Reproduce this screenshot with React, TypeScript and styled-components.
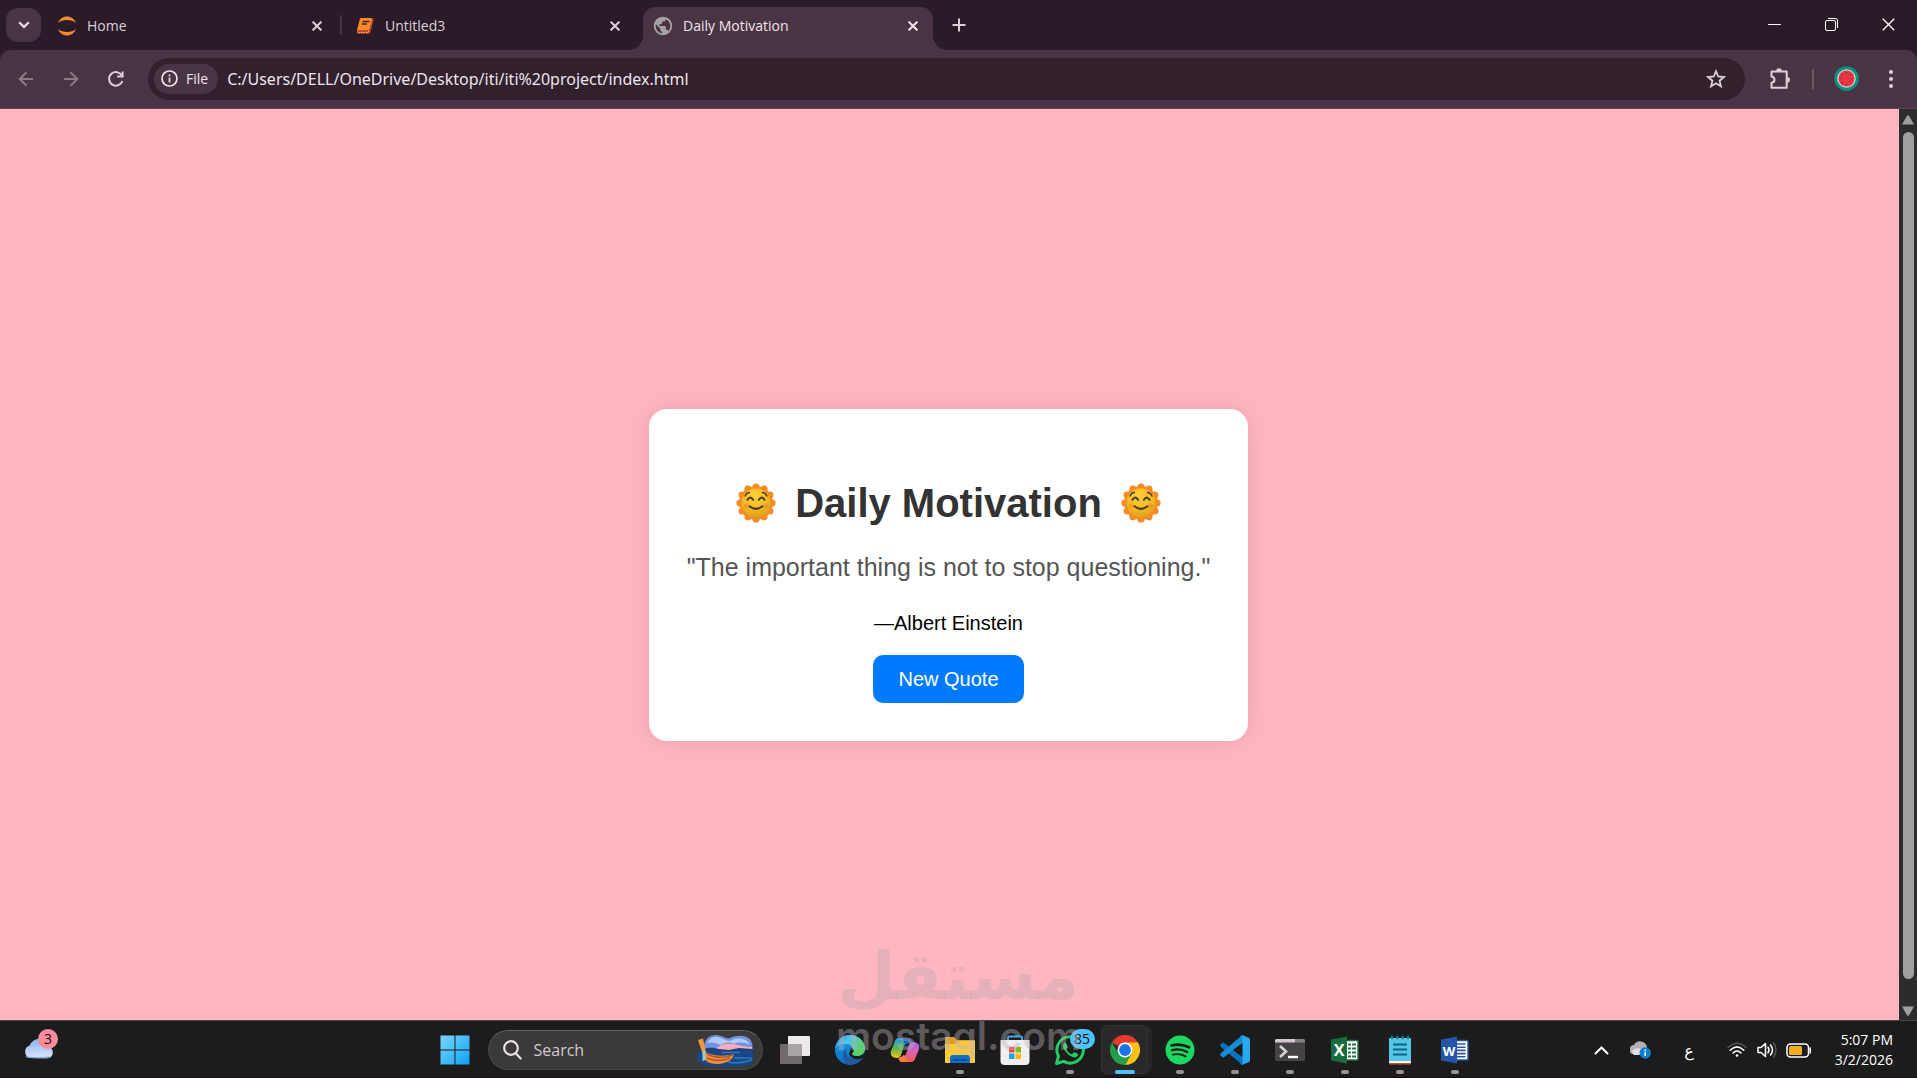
import React from "react";
import styled, { createGlobalStyle } from "styled-components";
import { MdPublic } from "react-icons/md";

const frame = "#2b1a27";
const surface = "#4a3444";
const field = "#33202d";
const ink = "#dccfd8";
const uiFont = '"Open Sans", "Noto Sans", sans-serif';

const GlobalStyle = createGlobalStyle`
  * { box-sizing: border-box; }
  body { margin: 0; background: ${frame}; font-family: ${uiFont}; }
  button, input { font: inherit; color: inherit; border: 0; padding: 0; background: none; outline: none; }
  svg { display: block; flex: none; }
`;

const Screen = styled.div`
  height: 100vh;
  display: flex;
  flex-direction: column;
  overflow: hidden;
  position: relative;
`;

/* ---------- browser frame ---------- */

const TabStrip = styled.header`
  height: 50px;
  display: flex;
  align-items: flex-start;
  padding-left: 6px;
  background: ${frame};
  color: ${ink};
`;

const TabSearch = styled.button`
  width: 35px;
  height: 34px;
  margin: 8px 6px 0 0;
  border-radius: 12px;
  background: ${surface};
  display: grid;
  place-items: center;
`;

const Tab = styled.div<{ $active?: boolean }>`
  position: relative;
  width: 290px;
  height: 43px;
  margin-top: 7px;
  padding: 0 10px 6px 11px;
  display: flex;
  align-items: center;
  border-radius: 12px 12px 0 0;
  background: ${(p) => (p.$active ? surface : "transparent")};
  color: ${(p) => (p.$active ? "#eee4ea" : ink)};

  &::before,
  &::after {
    content: "";
    display: ${(p) => (p.$active ? "block" : "none")};
    position: absolute;
    bottom: 0;
    width: 15px;
    height: 15px;
  }
  &::before {
    right: 100%;
    background: radial-gradient(circle at 0 0, transparent 15px, ${surface} 15px);
  }
  &::after {
    left: 100%;
    background: radial-gradient(circle at 100% 0, transparent 15px, ${surface} 15px);
  }
`;

const TabTitle = styled.button`
  flex: 1;
  display: flex;
  align-items: center;
  gap: 11px;
  font-size: 14px;
  line-height: 20px;
  text-align: left;
`;

const IconButton = styled.button<{ $w?: number; $h?: number }>`
  width: ${(p) => p.$w ?? 20}px;
  height: ${(p) => p.$h ?? 20}px;
  display: grid;
  place-items: center;
  flex: none;
`;

const TabGap = styled.div<{ $line?: boolean }>`
  width: 8px;
  height: 50px;
  display: grid;
  place-items: center;
  &::before {
    content: "";
    width: 2px;
    height: 20px;
    border-radius: 1px;
    background: ${(p) => (p.$line ? surface : "transparent")};
  }
`;

const WindowControls = styled.div`
  margin-left: auto;
  display: flex;
  color: #ffffff;
`;

const Toolbar = styled.nav`
  height: 59px;
  display: flex;
  align-items: center;
  padding: 0 4px 1px 3px;
  background: ${surface};
  border-bottom: 1px solid #57494f;
  border-radius: 10px 10px 0 0;
  color: ${ink};
`;

const AddressBar = styled.div`
  flex: 1;
  height: 42px;
  margin: 0 12px 0 10px;
  padding: 0 19px 0 6px;
  display: flex;
  align-items: center;
  border-radius: 21px;
  background: ${field};
`;

const FileChip = styled.button`
  height: 30px;
  padding: 0 10px 0 7px;
  display: flex;
  align-items: center;
  gap: 8px;
  border-radius: 15px;
  background: ${surface};
  color: #eee4ea;
  font-size: 14px;
  font-weight: 500;
`;

const AddressInput = styled.input`
  flex: 1;
  min-width: 0;
  margin-left: 9px;
  font-family: "Noto Sans", "Open Sans", sans-serif;
  font-size: 16px;
  line-height: 22px;
  color: #eee4ea;
`;

const ToolbarLine = styled.div`
  width: 2px;
  height: 20px;
  margin: 0 10px 0 10px;
  background: #6a5a62;
`;

/* ---------- web page ---------- */

const Viewport = styled.div`
  flex: 1;
  min-height: 0;
  display: flex;
`;

const Page = styled.main`
  flex: 1;
  display: flex;
  justify-content: center;
  align-items: center;
  padding: 20px 2px 0 0;
  background: #ffb6c1;
  font-family: "Liberation Sans", Arial, sans-serif;
  color: #000000;
`;

const Card = styled.section`
  padding: 64px 38px 38px;
  display: flex;
  flex-direction: column;
  align-items: center;
  border-radius: 18px;
  background: #ffffff;
  box-shadow: 0 0 25px rgba(0, 0, 0, 0.1);
`;

const Heading = styled.h1`
  margin: 0;
  display: flex;
  align-items: center;
  gap: 16px;
  font-size: 40px;
  line-height: 60px;
  color: #333333;
`;

const Quote = styled.p`
  margin: 20px 0 31px;
  font-size: 25px;
  line-height: 28px;
  color: #555555;
`;

const Author = styled.p`
  margin: 0 0 20px;
  font-size: 20px;
  line-height: 23px;
`;

const QuoteButton = styled.button`
  padding: 12px 25px;
  border-radius: 10px;
  background: #007bff;
  color: #ffffff;
  font-size: 20px;
  line-height: 24px;
`;

const ScrollTrack = styled.div`
  width: 18px;
  padding: 6px 0 4px;
  display: flex;
  flex-direction: column;
  align-items: center;
  gap: 7px;
  background: #2c2c2c;
`;

const ScrollThumb = styled.div`
  width: 11px;
  flex: 1;
  margin-bottom: 20px;
  border-radius: 6px;
  background: #9f9f9f;
`;

/* ---------- taskbar ---------- */

const Taskbar = styled.footer`
  height: 58px;
  display: grid;
  grid-template-columns: 1fr auto 1fr;
  background: #1c1c1c;
  border-top: 1px solid #484545;
  border-bottom: 1px solid #160d12;
  color: #ffffff;
`;

const Weather = styled.button`
  position: relative;
  justify-self: start;
  width: 36px;
  margin-left: 22px;
`;

const Badge = styled.span<{ $blue?: boolean }>`
  position: absolute;
  top: 8px;
  right: ${(p) => (p.$blue ? 3 : 0)}px;
  min-width: ${(p) => (p.$blue ? 25 : 20)}px;
  height: 20px;
  border-radius: 10px;
  background: ${(p) => (p.$blue ? "#4cc2ff" : "#fa8c99")};
  color: #111111;
  font-size: 14px;
  line-height: 20px;
  text-align: center;
`;

const Apps = styled.div`
  display: flex;
  align-items: center;
  padding-right: 7px;
`;

const AppSlot = styled.button<{ $running?: boolean; $current?: boolean }>`
  position: relative;
  width: 55px;
  height: 56px;
  display: grid;
  place-items: center;
  padding-top: 2px;

  &::after {
    content: "";
    display: ${(p) => (p.$running || p.$current ? "block" : "none")};
    position: absolute;
    bottom: 3px;
    left: 50%;
    width: ${(p) => (p.$current ? 20 : 8)}px;
    height: 4px;
    border-radius: 2px;
    transform: translateX(-50%);
    background: ${(p) => (p.$current ? "#4cc2ff" : "#9a9096")};
  }
  &::before {
    content: "";
    display: ${(p) => (p.$current ? "block" : "none")};
    position: absolute;
    inset: 4px 5px 3px 3px;
    border-radius: 6px;
    border: 1px solid #343434;
    background: #292929;
    box-shadow: 5px 0 0 -1px #262626;
  }
  svg { position: relative; }
`;

const SearchBox = styled.label`
  width: 275px;
  height: 40px;
  margin: 2px 5px 0;
  padding: 0 8px 0 14px;
  display: flex;
  align-items: center;
  gap: 12px;
  border: 1px solid #4c4849;
  border-top-color: #6b5f64;
  border-radius: 20px;
  background: #3b3a3a;
  color: #d5c8ce;
`;

const SearchInput = styled.input`
  flex: 1;
  min-width: 0;
  font-size: 16px;
  line-height: 24px;
  &::placeholder { color: #d5c8ce; opacity: 1; }
`;

const Tray = styled.div`
  justify-self: end;
  display: flex;
  align-items: center;
  padding: 2px 24px 0 0;
`;

const TrayButton = styled.button<{ $w: number }>`
  width: ${(p) => p.$w}px;
  height: 40px;
  display: grid;
  place-items: center;
  font-family: "DejaVu Sans", sans-serif;
  font-size: 16px;
`;

const Clock = styled.time`
  width: 72px;
  font-size: 14px;
  line-height: 20px;
  text-align: right;
  white-space: nowrap;
`;

const Watermark = styled.div`
  position: absolute;
  left: 0;
  right: 0;
  bottom: 22px;
  display: flex;
  flex-direction: column;
  align-items: center;
  color: rgba(170, 165, 165, 0.3);
  pointer-events: none;
  white-space: nowrap;
`;

const WatermarkArabic = styled.span`
  font-family: "DejaVu Sans", sans-serif;
  font-size: 66px;
  font-weight: 700;
  line-height: 78px;
`;

const WatermarkLatin = styled.span`
  font-family: Inter, sans-serif;
  font-size: 39px;
  font-weight: 600;
  line-height: 40px;
  color: rgba(190, 180, 185, 0.42);
`;

/* ---------- drawings ---------- */

const Cross = ({ size = 10, w = 2 }: { size?: number; w?: number }) => (
  <svg width={size} height={size} viewBox="0 0 10 10" stroke="currentColor" strokeWidth={(w * 10) / size}>
    <path d="M.6.6 9.4 9.4M9.4.6.6 9.4" />
  </svg>
);

const JupyterIcon = () => (
  <svg width="18" height="20" viewBox="0 0 18 20" fill="#f58a2c">
    <path d="M0 7C1.500 3 5 .5 9 .5S16.500 3 18 7C15.500 4.800 12.500 4 9 4S2.500 4.800 0 7Z" />
    <path d="M0 13C1.500 17 5 19.500 9 19.500s7.500-2.500 9-6.500c-2.500 2.200-5.500 3-9 3s-6.500-.8-9-3Z" />
  </svg>
);

const BookIcon = () => (
  <svg width="18" height="18" viewBox="0 0 18 18">
    <path d="m5 1 12 .5c.6 0 .8.500.6 1L14.500 15c-.3 1-1 1.700-2 1.700H2.500C1 16.700.4 15.500.8 14L3.600 2.500C3.800 1.500 4.200 1 5 1Z" fill="#c5482b" />
    <path d="M5.500 1H15c.8 0 1.100.5.9 1.200L13 13H3C2 13 1.500 13.300 1 14L4 2.300C4.200 1.500 4.700 1 5.500 1Z" fill="#fb8c2d" />
    <path d="M6.500 4.500h7M5.800 7h5" stroke="#40202a" strokeWidth="1.500" />
    <path d="M2.500 15.500H12l.8-1.500" stroke="#f5b089" strokeWidth="1" strokeDasharray="1.500 1" fill="none" />
  </svg>
);

const GlobeIcon = styled(MdPublic)`
  width: 22px;
  height: 22px;
  margin: 0 -2px;
  color: #a5a2a3;
`;

const Sun = () => {
  const petals = Array.from({ length: 12 }, (_, i) => (i * Math.PI) / 6);
  return (
    <svg width="46" height="42" viewBox="-23 -21 46 42" role="img" aria-label="smiling sun">
      <defs>
        <radialGradient id="sunFace" cx="45%" cy="25%" r="80%">
          <stop offset="0" stopColor="#ffd03a" />
          <stop offset="0.6" stopColor="#f3b91f" />
          <stop offset="1" stopColor="#d99a20" />
        </radialGradient>
      </defs>
      <circle r="16.800" fill="#f58b24" />
      {petals.map((a) => (
        <circle key={a} cx={16 * Math.sin(a)} cy={-16 * Math.cos(a)} r="3.600" fill="#f58b24" />
      ))}
      <circle r="14.500" fill="url(#sunFace)" />
      <circle cx="-10" cy="3" r="2.500" fill="#f58b30" opacity=".6" />
      <circle cx="10" cy="3" r="2.500" fill="#f58b30" opacity=".6" />
      <g fill="none" stroke="#4b3a3c" strokeLinecap="round">
        <path d="M-11-7Q-9.500-10.500-6.500-10.500M11-7Q9.500-10.500 6.500-10.500" strokeWidth="1.400" />
        <path d="M-8.500-3.200Q-5.700-8-2.900-3.200M2.900-3.200Q5.700-8 8.500-3.200M-6.500 3.200Q0 8.500 6.500 3.200" strokeWidth="2" />
      </g>
    </svg>
  );
};

const Avatar = () => (
  <svg width="25" height="25" viewBox="-12.500 -12.500 25 25">
    <circle r="12.300" fill="#07917f" />
    <circle r="9.300" fill="#d7d5c8" />
    <circle r="8" fill="#e83747" />
    {[0, 45, 90, 135, 180, 225, 270, 315].map((d) => (
      <path key={d} d="M0-6.200V-4.600" stroke="#77303b" strokeWidth="1" transform={`rotate(${d})`} />
    ))}
  </svg>
);

const Arrow = ({ flip }: { flip?: boolean }) => (
  <svg width="16" height="16" viewBox="0 0 16 16" fill="none" stroke="#8a7a82" strokeWidth="2">
    <path d={flip ? "M1 8h13M7.500 1.200 14.300 8l-6.800 6.800" : "M15 8H2M8.500 1.200 1.700 8l6.800 6.800"} />
  </svg>
);

const Reload = () => (
  <svg width="18" height="18" viewBox="0 0 18 18" fill="none" stroke="currentColor" strokeWidth="2">
    <path d="M15 5.800A6.800 6.800 0 1 0 15.400 11" />
    <path d="M15.600 1.500v5h-5.400" />
  </svg>
);

const Info = () => (
  <svg width="17" height="17" viewBox="0 0 17 17" fill="none" stroke="currentColor" strokeWidth="1.700">
    <circle cx="8.500" cy="8.500" r="7.500" />
    <path d="M8.500 7.600v4.800M8.500 4.400v1.800" />
  </svg>
);

const Star = () => (
  <svg width="20" height="20" viewBox="0 0 20 20" fill="none" stroke="currentColor" strokeWidth="1.800">
    <path d="m10 2.200 2.200 5.300 5.700.5-4.300 3.700 1.300 5.600-4.900-3-4.900 3 1.300-5.600L2.100 8l5.700-.5Z" />
  </svg>
);

const Puzzle = () => (
  <svg width="22" height="22" viewBox="0 0 22 22">
    <path d="M2.500 3.500h15.200v16.200H2.500v-4.900c1.900-.4 3-1.500 3-3.100s-1.100-2.800-3-3.200Z" fill="none" stroke="currentColor" strokeWidth="2" strokeLinejoin="round" />
    <path d="M7.200 3a2.800 2.800 0 0 1 5.600 0ZM18.200 9a2.800 2.800 0 0 1 0 5.600Z" fill="currentColor" />
  </svg>
);

const Dots = () => (
  <svg width="6" height="20" viewBox="0 0 6 20" fill="currentColor">
    <circle cx="3" cy="3" r="2" /><circle cx="3" cy="10" r="2" /><circle cx="3" cy="17" r="2" />
  </svg>
);

const Triangle = ({ down }: { down?: boolean }) => (
  <svg width="12" height="10" viewBox="0 0 12 10" fill="#9f9f9f">
    <path d={down ? "M0 .5h12L7 9.300q-1 .9-2 0Z" : "M0 9.500h12L7 .7q-1-.9-2 0Z"} />
  </svg>
);

const CloudIcon = () => (
  <svg width="32" height="22" viewBox="0 0 32 22">
    <defs>
      <linearGradient id="cloud" x2="0" y2="1"><stop stopColor="#8fb0ee" /><stop offset="1" stopColor="#d6e7fb" /></linearGradient>
    </defs>
    <path d="M8 20a6.500 6.500 0 0 1-.3-12.500A10 10 0 0 1 27 9a5.700 5.700 0 0 1-1 11Z" fill="url(#cloud)" />
    <path d="M4 18.500c2 1.500 20 2 24 .2" stroke="#86a8e8" fill="none" strokeWidth="1.500" />
  </svg>
);

const WindowsIcon = () => (
  <svg width="30" height="30" viewBox="0 0 30 30">
    <defs><linearGradient id="win" x2="1" y2="1"><stop stopColor="#7bd7fb" /><stop offset=".5" stopColor="#44bdf8" /><stop offset="1" stopColor="#119df5" /></linearGradient></defs>
    <path d="M.5.5h14v14H.5ZM15.500.5h14v14h-14ZM.5 15.500h14v14H.5ZM15.500 15.500h14v14h-14Z" fill="url(#win)" />
  </svg>
);

const SearchIcon = () => (
  <svg width="19" height="20" viewBox="0 0 19 20" fill="none" stroke="#eadfe4" strokeWidth="2.200" strokeLinecap="round">
    <circle cx="8" cy="8" r="6.800" /><path d="m13 13.500 4.700 4.900" />
  </svg>
);

const BoatScene = () => (
  <svg width="58" height="33" viewBox="0 0 58 33">
    <path d="M8 12C9 3 17-1 25 2c4 1 5 3 9 2 8-4 20-3 22 5q1 4 .5 8L8 18Z" fill="#6f93dc" />
    <path d="M11 9c3-6 9-7 14-5s7 4 11 2c7-3 16-1 18 5-6-3-12-3-16-1-5-3-9-1-13 1-5-2-10-3-14-2Z" fill="#b3c9f8" />
    <path d="M20 15c3-4 10-6 17-5s12 3 19 3v3l-36 1Z" fill="#f4adb9" />
    <path d="M8 15c6-2 10-1 15 0l10 1 10-2 14 1v4H2c1-2 3-3 6-4Z" fill="#22407c" />
    <path d="M1 20c3-3 10-3 18-3h38v8c0 4-1 5-4 6-10 2-30 2-41 1C3 31 0 26 1 20Z" fill="#184786" />
    <path d="M32 28c8 2 15 1 24-2M38 24h18M26 18.500h18" stroke="#2e78c2" strokeWidth="1.400" fill="none" />
    <path d="M8 17c7 5 20 6 30 3-1 6-7 9-15 10-8 0-13-2-14-5Z" fill="#f08a35" />
    <path d="M9 18c7 6 18 7 28 3M11 24c7 3 16 3 23 0" stroke="#a64e26" strokeWidth="1.300" fill="none" />
    <path d="m2 6 5-1.500 3.500 16-3 2Z" fill="#ef9741" />
    <path d="M6.500 17h3v9l-3 1Z" fill="#8fd0dd" />
  </svg>
);

const TaskViewIcon = () => (
  <svg width="30" height="28" viewBox="0 0 30 28">
    <path d="M8 0h21a1 1 0 0 1 1 1v18a1 1 0 0 1-1 1H8Z" fill="#eeeaec" />
    <rect y="8" width="22" height="20" rx="1" fill="#716a6e" />
    <path d="M8 8h14v12H8Z" fill="#aaa4a7" />
  </svg>
);

const EdgeIcon = () => (
  <svg width="30" height="30" viewBox="0 0 30 30">
    <defs>
      <linearGradient id="edgeTop" x2="1" y2=".5"><stop stopColor="#1f8fd8" /><stop offset=".45" stopColor="#4fc3ea" /><stop offset="1" stopColor="#5fd35c" /></linearGradient>
      <linearGradient id="edgeSide" y2="1" x2="0"><stop stopColor="#1ba2e4" /><stop offset="1" stopColor="#0a6cc4" /></linearGradient>
    </defs>
    <circle cx="15" cy="15" r="15" fill="url(#edgeSide)" />
    <path d="M0 13C2 4 8 0 15 0c9 0 15 7 15 13 0 5-4 8-9 8-3 0-5-1-4-3 3-4 0-9-6-9C6 9 2 11 0 13Z" fill="url(#edgeTop)" />
    <path d="M11.500 13c-3 8 5 14 16 10-4 5-9 7-13 7C7 28 6 18 11.500 13Z" fill="#215a9c" />
    <path d="M16 12.500c4 1.500 3 4 1.200 6 1.500 3.500 8 3.500 12.800-1v4L27.500 23C21 26 15 23 14 18.500Z" fill="#1c1c1c" />
    <path d="M17 18.500C20 21 26 20 29.500 16.500a9 9 0 0 1-9 4.500c-2 0-3.800-1-3.500-2.500Z" fill="#4fc777" />
  </svg>
);

const CopilotIcon = () => (
  <svg width="30" height="28" viewBox="0 0 30 28">
    <defs>
      <linearGradient id="copA" x2="0" y2="1"><stop stopColor="#20a4ee" /><stop offset=".5" stopColor="#56b64b" /><stop offset="1" stopColor="#f4c31e" /></linearGradient>
      <linearGradient id="copB" x2="0" y2="1"><stop stopColor="#a364e6" /><stop offset=".5" stopColor="#d963b1" /><stop offset="1" stopColor="#fa5a4c" /></linearGradient>
    </defs>
    <path d="M9 2h9c2 0 3 2 3.500 4L17 8c-2 0-3 1-3.600 3.500L11 19c-.5 2-2 3-4 3-5 0-7-3-6-7L5 5c.6-2 2-3 4-3Z" fill="url(#copA)" />
    <path d="M21 26h-9c-2 0-3-2-3.500-4L13 20c2 0 3-1 3.600-3.500L19 9c.5-2 2-3 4-3 5 0 7 3 6 7l-4 10c-.6 2-2 3-4 3Z" fill="url(#copB)" />
    <path d="M12 2h6c2 0 3 2 3.500 4-3 0-4 1-5 3C14 8 14 4 12 2Z" fill="#1557c2" />
    <path d="M18 26h-6c-2 0-3-2-3.500-4 3 0 4-1 5-3 2.500 1 2.500 5 4.500 7Z" fill="#f28140" />
  </svg>
);

const FolderIcon = () => (
  <svg width="30" height="28" viewBox="0 0 30 28">
    <path d="M0 2q0-1 1-1h8l3 3h17q1 0 1 1v8H0Z" fill="#e19d18" />
    <path d="M0 8h10l3-3h17v21q0 1-1 1H1q-1 0-1-1Z" fill="#fbc93d" />
    <path d="M5 27v-5q0-3 3-3h14q3 0 3 3v5Z" fill="#0f6fc5" /><path d="M8 24h14" stroke="#0b4f96" strokeWidth="2" />
  </svg>
);

const StoreIcon = () => (
  <svg width="30" height="30" viewBox="0 0 30 30">
    <path d="M8 6V2.500Q8 1.500 9 1.500h12q1 0 1 1V6" fill="none" stroke="#39a9ec" strokeWidth="2" />
    <path d="M.5 5h29v21q0 4-4 4h-21q-4 0-4-4Z" fill="#f1eef0" />
    <path d="M9 12h5.500v5.500H9Z" fill="#ea4a34" /><path d="M15.500 12H21v5.500h-5.500Z" fill="#83b81c" />
    <path d="M9 18.500h5.500V24H9Z" fill="#1ba5ed" /><path d="M15.500 18.500H21V24h-5.500Z" fill="#fab81c" />
  </svg>
);

const WhatsAppIcon = () => (
  <svg width="32" height="32" viewBox="0 0 32 32" fill="none">
    <path d="m2.500 29.500 2-7.300A13.200 13.200 0 1 1 9.600 27.400Z" stroke="#21cf5f" strokeWidth="3" strokeLinejoin="round" />
    <path d="M11 8.500c-2 1-2.500 3-1.500 5.500 2 4.500 5.500 8 10 9.300 2 .6 4.500-.8 4.700-3 0-.6-3.700-2.300-4.200-2.100-.7.300-1.300 2-2 2-2 0-5.200-3.300-5.500-4.700 0-.7 1.400-1.500 1.300-2.200-.1-.8-1.400-4.600-2.800-4.800Z" fill="#21cf5f" />
  </svg>
);

const ChromeIcon = () => (
  <svg width="30" height="30" viewBox="-15 -15 30 30">
    <path d="M0 0-13-7.500A15 15 0 0 1 13-7.500Z" fill="#e6392f" />
    <path d="M0-7.500H13A15 15 0 0 1 0 15L6.500 3.700Z" fill="#fbc116" />
    <path d="M-6.500 3.700-13-7.500A15 15 0 0 0 0 15L6.500 3.700Z" fill="#1fa049" />
    <circle r="7.500" fill="#fff" /><circle r="5.900" fill="#1a73e8" />
  </svg>
);

const SpotifyIcon = () => (
  <svg width="30" height="30" viewBox="0 0 30 30" fill="none" stroke="#1a1f1b" strokeLinecap="round">
    <circle cx="15" cy="15" r="14.500" fill="#1ed760" stroke="none" />
    <path d="M6.500 10.500c6-1.700 12-1.100 17.500 1.800" strokeWidth="2.700" /><path d="M7.200 15.200c5.200-1.400 10.200-.8 15 1.800" strokeWidth="2.300" /><path d="M7.800 19.600c4.500-1 8.700-.6 12.800 1.700" strokeWidth="1.900" />
  </svg>
);

const CodeIcon = () => (
  <svg width="30" height="30" viewBox="0 0 30 30">
    <path d="m22 0 7 3q1 .5 1 1.500v21q0 1-1 1.500l-7 3-2-2V2Z" fill="#27a9f2" />
    <path d="m0 10 2.500-2.300q.8-.5 1.500 0L22.500 22v8L1 12Z" fill="#0873be" />
    <path d="m0 20 2.500 2.300q.8.500 1.500 0L22.500 8V0L1 18Z" fill="#168bd8" />
    <path d="M22.500 8v14L13 15Z" fill="#1c1c1c" />
  </svg>
);

const TerminalIcon = () => (
  <svg width="30" height="24" viewBox="0 0 30 24">
    <rect width="30" height="22" y="1" rx="1.500" fill="#454345" />
    <path d="M0 4.500V2.500Q0 1 1.500 1H20v3.500Z" fill="#d4c8d0" /><path d="M20 1h8.500Q30 1 30 2.500v2H20Z" fill="#858083" />
    <path d="m5 8 6 5.500L5 19" fill="none" stroke="#d8d1d5" strokeWidth="2.600" /><path d="M13 19h10" stroke="#fff" strokeWidth="2.400" />
  </svg>
);

const OfficeIcon = ({ letter, color, deep }: { letter: string; color: string; deep: string }) => (
  <svg width="28" height="28" viewBox="0 0 28 28">
    <rect x="13" y="4.500" width="14" height="19.500" rx="1" fill="#fff" stroke={color} strokeWidth="1.400" />
    {letter === "X" ? (
      <path d="M17 7.500h3v2h-3Zm4 0h4v2h-4Zm-4 4h3v2h-3Zm4 0h4v2h-4Zm-4 4h3v2h-3Zm4 0h4v2h-4Zm-4 4h3v2h-3Zm4 0h4v2h-4Z" fill={color} />
    ) : (
      <path d="M16 8h8.500M16 11.200h8.500M16 14.400h8.500M16 17.600h8.500M16 20.800h8.500" stroke={color} strokeWidth="1.600" />
    )}
    <path d="M0 3.500 16 .5v27L0 24.500Z" fill={deep} />
    <text x="8" y="19.500" fontFamily="Open Sans, sans-serif" fontSize={letter === "X" ? 16 : 13} fontWeight="700" textAnchor="middle" fill="#fff">{letter}</text>
  </svg>
);

const NotepadIcon = () => (
  <svg width="24" height="30" viewBox="0 0 24 30">
    <path d="M1 3h22v26H1Z" fill="#54c7e8" /><path d="M1 26h22v2H1Z" fill="#f1f1f1" /><path d="M1 28h22v1.500H1Z" fill="#b65734" />
    <path d="M4 .8v3.500M9.300.8v3.500M14.700.8v3.500M20 .8v3.500" stroke="#157f9e" strokeWidth="2" />
    <path d="M5 9.500h14M5 14.500h14M5 19.500h14" stroke="#0d637f" strokeWidth="2" />
  </svg>
);

const ChevronUp = () => (
  <svg width="15" height="9" viewBox="0 0 15 9" fill="none" stroke="#fff" strokeWidth="2" strokeLinecap="round"><path d="m1.500 7.500 6-6 6 6" /></svg>
);

const OneDriveIcon = () => (
  <svg width="22" height="18" viewBox="0 0 22 18">
    <path d="M4 13.500A4.500 4.500 0 0 1 4 4a7 7 0 0 1 13 2v8Z" fill="#b5aeb2" /><path d="M2 11C5 5 11 7 17 12v2H4Z" fill="#e4dfe1" />
    <circle cx="15.200" cy="12" r="5.700" fill="#0b7fd3" /><path d="M15.200 10.800v4.300M15.200 8.400V10" stroke="#fff" strokeWidth="1.500" />
  </svg>
);

const WifiIcon = () => (
  <svg width="20" height="16" viewBox="0 0 20 16" fill="none" stroke="#fff" strokeWidth="1.600" strokeLinecap="round">
    <path d="M1 5.500Q10-3 19 5.500" stroke="#565256" /><path d="M3.200 8.200Q10 1.500 16.800 8.200M6 11Q10 7 14 11" /><circle cx="10" cy="13.500" r="1.300" fill="#fff" stroke="none" />
  </svg>
);

const SpeakerIcon = () => (
  <svg width="20" height="18" viewBox="0 0 20 18" fill="none" stroke="#fff" strokeWidth="1.500" strokeLinecap="round" strokeLinejoin="round">
    <path d="M1 6.500h3l4.500-4v13l-4.500-4H1Z" /><path d="M11 6.200q2 2.800 0 5.600M13.500 4q4 5 0 10" /><path d="M16.500 1.800q5 7.200 0 14.400" stroke="#565256" />
  </svg>
);

const BatteryIcon = () => (
  <svg width="26" height="15" viewBox="0 0 26 15">
    <rect x="1" y="1" width="21.500" height="13" rx="3.500" fill="none" stroke="#fff" strokeWidth="1.500" /><rect x="3" y="3" width="13" height="9" rx="1.500" fill="#f0ae1d" />
    <path d="M24.200 5v5" stroke="#fff" strokeWidth="1.500" strokeLinecap="round" />
  </svg>
);

/* ---------- screen ---------- */

const tabs = [
  { title: "Home", icon: <JupyterIcon />, line: true },
  { title: "Untitled3", icon: <BookIcon /> },
  { title: "Daily Motivation", icon: <GlobeIcon />, active: true },
];

const apps = [
  { name: "Task view", icon: <TaskViewIcon /> },
  { name: "Edge", icon: <EdgeIcon /> },
  { name: "Copilot", icon: <CopilotIcon /> },
  { name: "File Explorer", icon: <FolderIcon />, running: true },
  { name: "Store", icon: <StoreIcon /> },
  { name: "WhatsApp", icon: <WhatsAppIcon />, running: true, badge: "85" },
  { name: "Chrome", icon: <ChromeIcon />, current: true },
  { name: "Spotify", icon: <SpotifyIcon />, running: true },
  { name: "Code", icon: <CodeIcon />, running: true },
  { name: "Terminal", icon: <TerminalIcon />, running: true },
  { name: "Excel", icon: <OfficeIcon letter="X" color="#1f7145" deep="#186c3e" />, running: true },
  { name: "Notepad", icon: <NotepadIcon />, running: true },
  { name: "Word", icon: <OfficeIcon letter="W" color="#2a5699" deep="#2456a5" />, running: true },
];

export default function App() {
  return (
    <Screen>
      <GlobalStyle />
      <TabStrip>
        <TabSearch aria-label="Search tabs">
          <svg width="12" height="8" viewBox="0 0 12 8" fill="none" stroke="#eee4ea" strokeWidth="2.200"><path d="m1.200 1.200 4.800 4.800 4.800-4.800" /></svg>
        </TabSearch>
        {tabs.map((t) => (
          <React.Fragment key={t.title}>
            <Tab $active={t.active}>
              <TabTitle>{t.icon}{t.title}</TabTitle>
              <IconButton aria-label={`Close ${t.title}`}><Cross /></IconButton>
            </Tab>
            <TabGap $line={t.line} />
          </React.Fragment>
        ))}
        <IconButton $w={36} $h={50} aria-label="New tab">
          <svg width="14" height="14" viewBox="0 0 14 14" stroke="currentColor" strokeWidth="2"><path d="M7 .5v13M.5 7h13" /></svg>
        </IconButton>
        <WindowControls>
          <IconButton $w={57} $h={48} aria-label="Minimize"><svg width="13" height="1" viewBox="0 0 13 1"><path d="M0 0h13v1H0Z" fill="#fff" /></svg></IconButton>
          <IconButton $w={57} $h={48} aria-label="Restore">
            <svg width="13" height="13" viewBox="0 0 13 13" fill="none" stroke="#fff"><rect x=".5" y="2.500" width="10" height="10" rx="1.500" /><path d="M3 .5h7.500q2 0 2 2V10" /></svg>
          </IconButton>
          <IconButton $w={57} $h={48} aria-label="Close window"><Cross size={13} w={1.3} /></IconButton>
        </WindowControls>
      </TabStrip>

      <Toolbar>
        <IconButton $w={45} $h={45} aria-label="Back"><Arrow /></IconButton>
        <IconButton $w={45} $h={45} aria-label="Forward"><Arrow flip /></IconButton>
        <IconButton $w={45} $h={45} aria-label="Reload"><Reload /></IconButton>
        <AddressBar>
          <FileChip><Info />File</FileChip>
          <AddressInput aria-label="Address" defaultValue="C:/Users/DELL/OneDrive/Desktop/iti/iti%20project/index.html" />
          <IconButton aria-label="Bookmark"><Star /></IconButton>
        </AddressBar>
        <IconButton $w={45} $h={44} aria-label="Extensions"><Puzzle /></IconButton>
        <ToolbarLine />
        <IconButton $w={44} $h={44} aria-label="Profile"><Avatar /></IconButton>
        <IconButton $w={45} $h={44} aria-label="Menu"><Dots /></IconButton>
      </Toolbar>

      <Viewport>
        <Page>
          <Card>
            <Heading><Sun />Daily Motivation<Sun /></Heading>
            <Quote>"The important thing is not to stop questioning."</Quote>
            <Author>—Albert Einstein</Author>
            <QuoteButton>New Quote</QuoteButton>
          </Card>
        </Page>
        <ScrollTrack><Triangle /><ScrollThumb /><Triangle down /></ScrollTrack>
      </Viewport>

      <Taskbar>
        <Weather aria-label="Weather"><CloudIcon /><Badge>3</Badge></Weather>
        <Apps>
          <AppSlot aria-label="Start"><WindowsIcon /></AppSlot>
          <SearchBox>
            <SearchIcon />
            <SearchInput placeholder="Search" aria-label="Search" />
            <BoatScene />
          </SearchBox>
          {apps.map((a) => (
            <AppSlot key={a.name} aria-label={a.name} $running={a.running} $current={a.current}>
              {a.icon}
              {a.badge && <Badge $blue>{a.badge}</Badge>}
            </AppSlot>
          ))}
        </Apps>
        <Tray>
          <TrayButton $w={40} aria-label="Hidden icons"><ChevronUp /></TrayButton>
          <TrayButton $w={40} aria-label="OneDrive"><OneDriveIcon /></TrayButton>
          <TrayButton $w={56}>ع</TrayButton>
          <TrayButton $w={40} aria-label="Network"><WifiIcon /></TrayButton>
          <TrayButton $w={20} aria-label="Volume"><SpeakerIcon /></TrayButton>
          <TrayButton $w={44} aria-label="Battery"><BatteryIcon /></TrayButton>
          <Clock>5:07 PM<br />3/2/2026</Clock>
        </Tray>
      </Taskbar>

      <Watermark>
        <WatermarkArabic>مستقل</WatermarkArabic>
        <WatermarkLatin>mostaql.com</WatermarkLatin>
      </Watermark>
    </Screen>
  );
}
